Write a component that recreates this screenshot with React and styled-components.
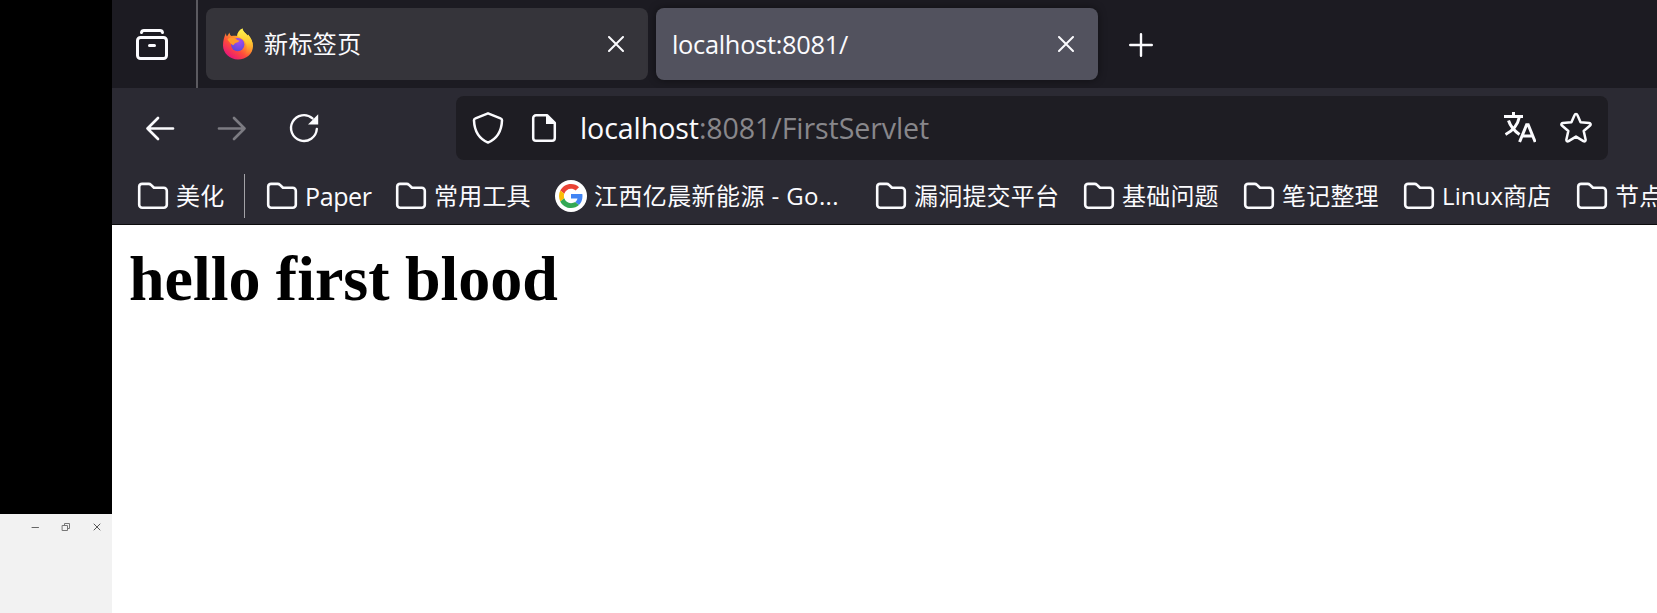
import React from "react";
import styled, { createGlobalStyle } from "styled-components";

const Global = createGlobalStyle`
  * { box-sizing: border-box; }
  body { margin: 0; overflow: hidden; background: #fff; }
  svg { display: block; flex: none; }
`;

const ui = `"Open Sans", "Noto Sans CJK SC", sans-serif`;

const Screen = styled.div`
  display: flex;
  width: 1657px;
  height: 613px;
  overflow: hidden;
`;

const Desktop = styled.aside`
  display: flex;
  flex-direction: column;
  justify-content: flex-end;
  flex: none;
  width: 112px;
  background: #000;
`;

const BackWindow = styled.div`
  display: flex;
  align-items: flex-start;
  justify-content: flex-end;
  gap: 21px;
  height: 99px;
  padding: 8px 10px 0 0;
  background: #f2f2f2;
`;

const Browser = styled.main`
  display: flex;
  flex-direction: column;
  flex: 1;
  min-width: 0;
`;

const TabStrip = styled.div`
  display: flex;
  align-items: flex-start;
  height: 88px;
  background: #1c1b22;
`;

const RecentButton = styled.button`
  display: flex;
  width: 86px;
  height: 88px;
  margin: 0 8px 0 0;
  padding: 28px 0 0 24px;
  border: 0;
  border-right: 2px solid #5b5a60;
  background: none;
`;

const Tab = styled.div`
  display: flex;
  align-items: center;
  width: 442px;
  height: 72px;
  margin: 8px 8px 0 0;
  padding: 0 24px 0 16px;
  border-radius: 8px;
  background: ${(p) => (p.$active ? "#52525e" : "#35343a")};
  box-shadow: ${(p) => (p.$active ? "0 0 8px rgba(0,0,0,.45)" : "none")};
  color: #fbfbfe;
`;

const TabTitle = styled.span`
  flex: 1;
  margin-left: ${(p) => (p.$icon ? "10px" : "0")};
  font: ${(p) => p.$size || 24}px/32px ${ui};
  letter-spacing: ${(p) => p.$track || 0}px;
`;

const NewTab = styled.div`
  padding: 33px 0 0 23px;
`;

const NavBar = styled.div`
  display: flex;
  height: 80px;
  padding: 8px 49px 0 32px;
  background: #2b2a33;
`;

const NavButtons = styled.div`
  display: flex;
  gap: 40px;
  width: 312px;
  padding-top: 16px;
`;

const UrlBar = styled.div`
  display: flex;
  align-items: center;
  flex: 1;
  height: 64px;
  padding: 0 16px;
  border-radius: 8px;
  background: #1e1d23;
`;

const UrlStart = styled.div`
  display: flex;
  gap: 24px;
`;

const Address = styled.div`
  flex: 1;
  margin-left: 20px;
  font: 28.6px/40px ${ui};
  letter-spacing: -0.1px;
  color: #fbfbfe;
`;

const Path = styled.span`
  color: #88878b;
`;

const UrlIcons = styled.div`
  display: flex;
  gap: 24px;
`;

const Bookmarks = styled.div`
  display: flex;
  align-items: flex-start;
  height: 57px;
  padding: 6px 0 0 25px;
  border-bottom: 1px solid #0c0c0d;
  background: #2b2a33;
  overflow: hidden;
`;

const Bookmark = styled.div`
  display: flex;
  align-items: center;
  flex: none;
  gap: 7px;
  height: 44px;
  margin-right: ${(p) => (p.$last ? 0 : 24)}px;
`;

const Label = styled.span`
  width: ${(p) => p.$w}px;
  font: ${(p) => p.$size || 24}px/32px ${ui};
  letter-spacing: ${(p) => p.$track || 0}px;
  white-space: nowrap;
  color: #fbfbfe;
`;

const Separator = styled.div`
  flex: none;
  width: 1px;
  height: 44px;
  margin: 0 21px 0 -5px;
  background: #a3a2a7;
`;

const Page = styled.section`
  flex: 1;
  padding: 0 17px;
  background: #fff;
`;

const Heading = styled.h1`
  margin: 17px 0 0;
  font: bold 64px/74px "Liberation Serif", serif;
  word-spacing: -0.7px;
  color: #000;
`;

const Line = ({ size = 32, w = 2, color = "#fbfbfe", children }) => (
  <svg width={size} height={size} viewBox={`0 0 ${size} ${size}`} fill="none" stroke={color}
    strokeWidth={w} strokeLinecap="round" strokeLinejoin="round">{children}</svg>
);

const Close = () => (
  <Line size={16}><path d="M1 1l14 14M15 1L1 15" /></Line>
);

const Folder = () => (
  <Line w={2.6}><path d="M2.200 6.500v18.300a3 3 0 0 0 3 3h21.600a3 3 0 0 0 3-3V10.800a3 3 0 0 0-3-3H17l-3-2.900a3.500 3.500 0 0 0-2.400-1H5.200a3 3 0 0 0-3 2.600z" /></Line>
);

const Google = () => (
  <svg width="32" height="32" viewBox="0 0 32 32">
    <circle cx="16" cy="16" r="16" fill="#fff" />
    <g transform="translate(4 4) scale(.5)">
      <path fill="#EA4335" d="M24 9.5c3.54 0 6.71 1.22 9.21 3.6l6.85-6.85C35.9 2.38 30.47 0 24 0 14.62 0 6.51 5.38 2.56 13.22l7.98 6.19C12.43 13.72 17.74 9.5 24 9.5z" />
      <path fill="#4285F4" d="M46.98 24.55c0-1.57-.15-3.09-.38-4.55H24v9.02h12.94c-.58 2.96-2.26 5.48-4.78 7.18l7.73 6c4.51-4.18 7.09-10.36 7.09-17.65z" />
      <path fill="#FBBC05" d="M10.53 28.59c-.48-1.45-.76-2.99-.76-4.59s.27-3.14.76-4.59l-7.98-6.19C.92 16.46 0 20.12 0 24c0 3.88.92 7.54 2.56 10.78l7.97-6.19z" />
      <path fill="#34A853" d="M24 48c6.48 0 11.93-2.13 15.89-5.81l-7.73-6c-2.15 1.45-4.92 2.3-8.16 2.3-6.26 0-11.57-4.22-13.47-9.91l-7.98 6.19C6.51 42.62 14.62 48 24 48z" />
    </g>
  </svg>
);

const Firefox = () => (
  <svg width="32" height="32" viewBox="0 0 32 32">
    <defs>
      <linearGradient id="flame" x1=".85" y1=".1" x2=".2" y2=".95">
        <stop offset="0" stopColor="#fff04a" />
        <stop offset=".35" stopColor="#ffa02c" />
        <stop offset=".65" stopColor="#ff4a3c" />
        <stop offset="1" stopColor="#e5127e" />
      </linearGradient>
      <linearGradient id="tail" x1=".5" y1="0" x2=".5" y2="1">
        <stop offset="0" stopColor="#fff44f" />
        <stop offset=".5" stopColor="#ffc830" />
        <stop offset="1" stopColor="#ff7a2c" stopOpacity="0" />
      </linearGradient>
      <radialGradient id="globe" cx=".6" cy=".25" r=".8">
        <stop offset="0" stopColor="#a64bf0" />
        <stop offset="1" stopColor="#5a49d8" />
      </radialGradient>
    </defs>
    <path fill="url(#flame)" d="M4 5c0 1.600.3 2.600 1 3.600L7.500 4.500c.2 1.700.8 2.900 2 3.600 2-.5 4-.6 5.700-.1C15.500 4.500 17.500 2 20.400.5c.5 3 3 4.500 5.300 7.200l.3-1.200c3 3.500 5 7.500 5 11.500 0 7.800-6.700 13.500-15 13.500S1 25 1 17.500C1 12.500 2.200 8.500 4 5z" />
    <path fill="url(#tail)" d="M20.400.5c.5 3 3 4.500 5.300 7.200l.3-1.200c3 3.500 5 7.500 4.600 12C29 23.500 26 27 21.500 28c3.500-3.500 4-8 2.500-12.500C22.500 11 17 9 15.200 8 15.500 4.500 17.500 2 20.400.5z" />
    <circle cx="15.700" cy="16.600" r="6.700" fill="url(#globe)" />
    <path fill="#ff9a2b" d="M5.500 11.500C7.500 9 11 9 14 10.800c.8 1.200 2 1.700 3.500 1.800-.2 1.600-3 1.900-4.400 2.700-.8.500-1 1.500-1.900 2-1.700-.6-3.700-2.800-5.700-5.800z" />
  </svg>
);

const bookmarks = [
  { name: "Paper", w: 66, size: 25, track: -0.4 },
  { name: "常用工具", w: 97, track: 0.2 },
  { name: "江西亿晨新能源 - Go...", w: 257, track: 0.4, google: true },
  { name: "漏洞提交平台", w: 145, track: 0.2 },
  { name: "基础问题", w: 97, track: 0.2 },
  { name: "笔记整理", w: 97, track: 0.2 },
  { name: "Linux商店", w: 110, track: 0.1 },
  { name: "节点", w: 49, track: 0.2 },
];

export default function App() {
  return (
    <Screen>
      <Global />
      <Desktop>
        <BackWindow>
          <Line size={10} w={1} color="#666"><path d="M2 5.500h6.500" /></Line>
          <Line size={10} w={1} color="#777"><path d="M1.500 3.500h5v5h-5zM3.500 3V1.500h5v5H7" /></Line>
          <Line size={10} w={1} color="#555"><path d="M2 2l6 6M8 2L2 8" /></Line>
        </BackWindow>
      </Desktop>
      <Browser>
        <TabStrip>
          <RecentButton aria-label="Recent">
            <Line w={3}>
              <path d="M5.500 4.500A2.500 2.500 0 0 1 8 2.500h16A2.500 2.500 0 0 1 26.500 4.500M13.500 17.500h5" />
              <rect x="1.500" y="9.500" width="29" height="21" rx="3" />
            </Line>
          </RecentButton>
          <Tab>
            <Firefox />
            <TabTitle $icon $track={0.4}>新标签页</TabTitle>
            <Close />
          </Tab>
          <Tab $active>
            <TabTitle $size={25.4} $track={-0.3}>localhost:8081/</TabTitle>
            <Close />
          </Tab>
          <NewTab><Line size={24} w={2.4}><path d="M12 1.200v21.600M1.200 12h21.600" /></Line></NewTab>
        </TabStrip>
        <NavBar>
          <NavButtons>
            <Line w={2.7}><path d="M29 16.500H3.500M14 6L3.500 16.500 14 27" /></Line>
            <Line w={2.7} color="#7c7b82"><path d="M3 16.500h25.500M18 6l10.500 10.500L18 27" /></Line>
            <Line w={2.4}>
              <path d="M28.800 17A12.900 12.900 0 1 1 24.500 6.400" />
              <path d="M30.200 2.200v10.200H20z" fill="#fbfbfe" stroke="none" />
            </Line>
          </NavButtons>
          <UrlBar>
            <UrlStart>
              <Line w={2.5}><path d="M16 1.300L3.500 6.300c-1 .4-1.600 1.200-1.500 2.200C2.400 18.500 6.500 26.500 16 30.600 25.500 26.500 29.600 18.500 30 8.500c.1-1-.5-1.800-1.500-2.200z" /></Line>
              <Line w={2.5}>
                <path d="M19 3.200H8A2.800 2.800 0 0 0 5.200 6v20A2.800 2.800 0 0 0 8 28.800h16a2.800 2.800 0 0 0 2.800-2.800V11z" />
                <path d="M18 2.500V12h9.500z" fill="#fbfbfe" stroke="none" />
              </Line>
            </UrlStart>
            <Address>localhost<Path>:8081/FirstServlet</Path></Address>
            <UrlIcons>
              <svg width="32" height="32" viewBox="0 0 32 32" fill="none" stroke="#fbfbfe" strokeWidth="3">
                <path d="M0 4.500h19M9.500 0v4.500M15.500 4.500C14 12 9.500 18.500 1.500 22.500M4.500 8.500C6.500 14.500 10.500 19 15.500 22.500" />
                <path d="M15.600 30L22.600 12.800h1.600L31.200 30M18.200 24h10.400" />
              </svg>
              <Line w={2.5}><path d="M14.600 2.900a1.500 1.500 0 0 1 2.800 0l3.200 7.400 8.600.8c1.400.2 1.900 1.400.9 2.400L23.700 19l1.900 8.500c.2 1.600-.9 2.300-2.200 1.600L16 24.600l-7.400 4.500c-1.300.7-2.400 0-2.200-1.600L8.300 19l-6.400-5.500c-1-1-.5-2.200.9-2.400l8.600-.8z" /></Line>
            </UrlIcons>
          </UrlBar>
        </NavBar>
        <Bookmarks>
          <Bookmark><Folder /><Label $w={49} $track={0.2}>美化</Label></Bookmark>
          <Separator />
          {bookmarks.map((b, i) => (
            <Bookmark key={b.name} $last={i === bookmarks.length - 1}>
              {b.google ? <Google /> : <Folder />}
              <Label $w={b.w} $size={b.size} $track={b.track}>{b.name}</Label>
            </Bookmark>
          ))}
        </Bookmarks>
        <Page><Heading>hello first blood</Heading></Page>
      </Browser>
    </Screen>
  );
}
